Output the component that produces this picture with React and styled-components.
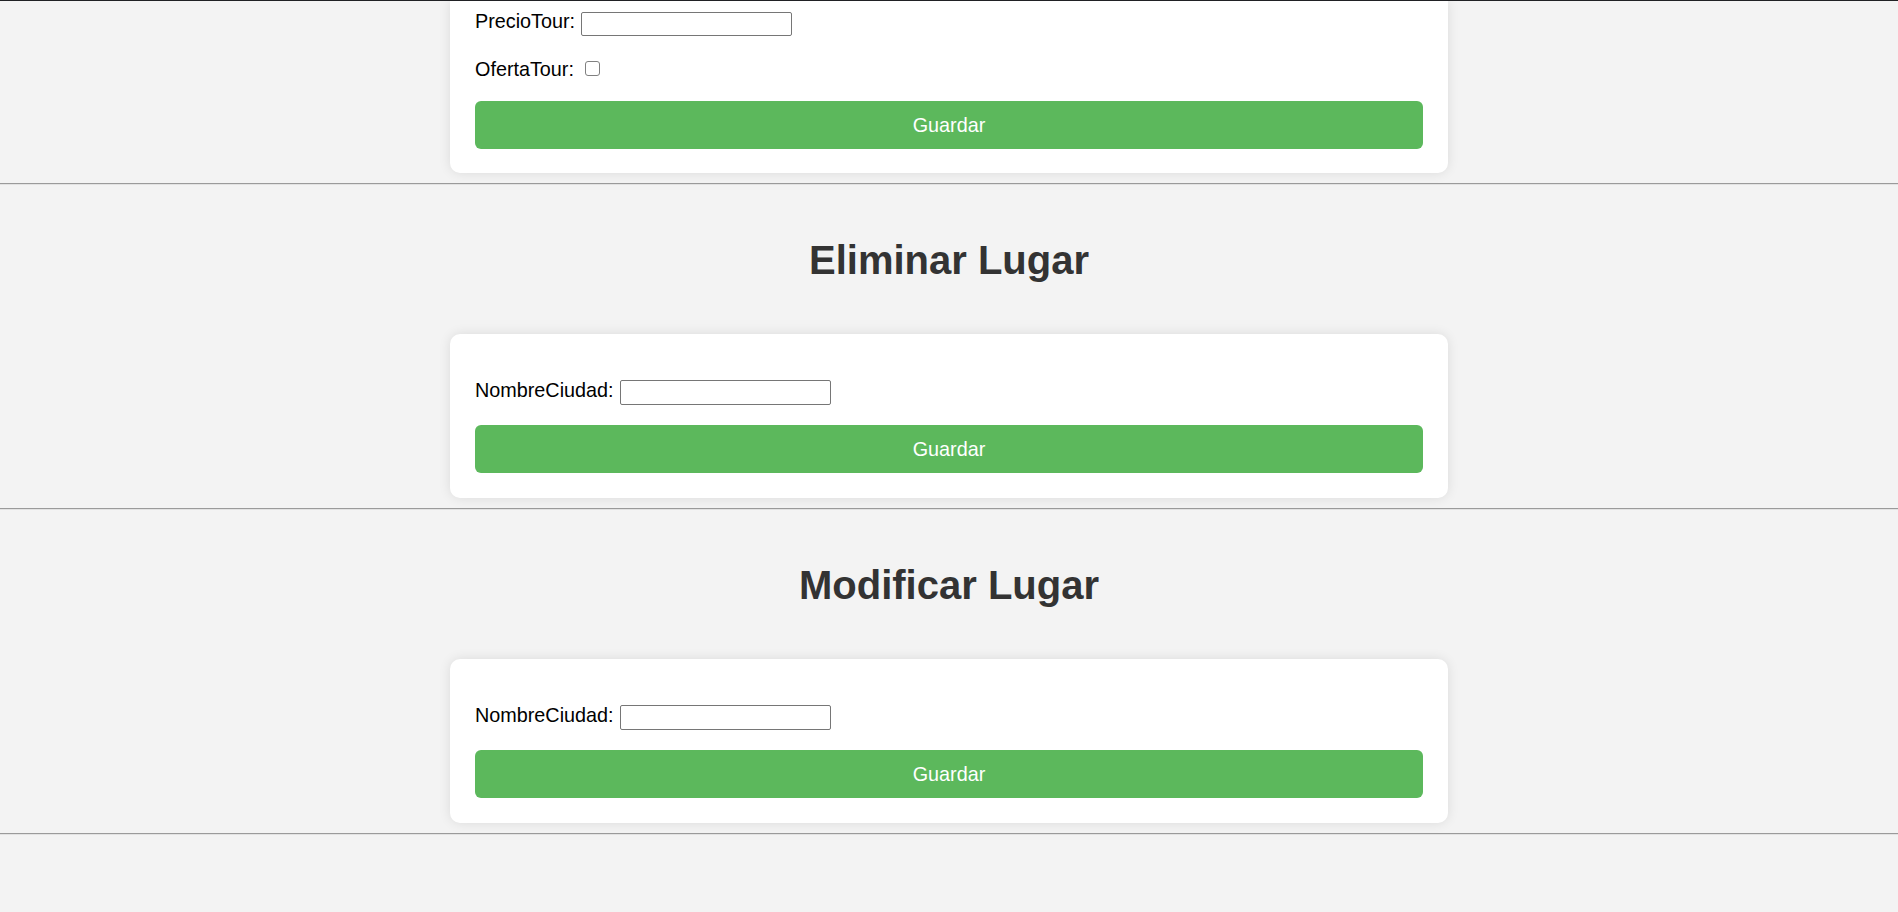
import React from "react";
import styled, { createGlobalStyle } from "styled-components";

const GlobalStyle = createGlobalStyle`
  html, body {
    margin: 0;
    padding: 0;
  }
  body {
    background: #f3f3f3;
    border-top: 1px solid #202124;
    font-family: "Liberation Sans", Arial, sans-serif;
    font-size: 19.8px;
    color: #000;
  }
`;

const Page = styled.div`
  display: flex;
  flex-direction: column;
`;

const Section = styled.section`
  display: flex;
  flex-direction: column;
  align-items: center;
`;

const Title = styled.h1`
  margin: 53px 0 52px;
  font-size: 40px;
  line-height: 44px;
  font-weight: 700;
  color: #333;
  text-align: center;
`;

const Card = styled.form`
  box-sizing: border-box;
  width: 998px;
  background: #fff;
  border-radius: ${(p) => (p.$cut ? "0 0 10px 10px" : "10px")};
  box-shadow: 0 0 12px rgba(0, 0, 0, 0.1);
  padding: ${(p) => (p.$cut ? "10px 25px 24px" : "46px 25px 25px")};
  display: flex;
  flex-direction: column;
  gap: 20px;
`;

const Row = styled.div`
  display: flex;
  align-items: center;
  gap: 6px;
  height: 25px;
`;

const Label = styled.label`
  font-size: 19.8px;
  line-height: 22px;
  color: #000;
  padding-bottom: ${(p) => (p.$raise ? 5 : 0)}px;
`;

const TextInput = styled.input`
  box-sizing: border-box;
  width: 211px;
  height: ${(p) => p.$h || 25}px;
  border: 1px solid #767676;
  border-radius: 2px;
  background: #fff;
  margin: 0;
  padding: 1px 3px;
  font-family: inherit;
  font-size: 16px;
`;

const Check = styled.input`
  appearance: none;
  -webkit-appearance: none;
  box-sizing: border-box;
  width: 15px;
  height: 15px;
  margin: 0 0 0 5px;
  border: 1.5px solid #808080;
  border-radius: 3px;
  background: #fff;
`;

const SaveButton = styled.button`
  width: 100%;
  height: 48px;
  border: none;
  border-radius: 6px;
  background: #5cb85c;
  color: #fff;
  font-family: "Liberation Sans", Arial, sans-serif;
  font-size: 19.8px;
  cursor: pointer;
`;

const Rule = styled.hr`
  width: 100%;
  margin: 10px 0 0;
  border: none;
  border-top: 1px solid #9a9a9a;
  border-bottom: 1px solid #e2e2e2;
  height: 0;
`;

const CitySection = ({ title }) => (
  <Section>
    <Title>{title}</Title>
    <Card onSubmit={(e) => e.preventDefault()}>
      <Row>
        <Label $raise>NombreCiudad:</Label>
        <TextInput type="text" />
      </Row>
      <SaveButton type="submit">Guardar</SaveButton>
    </Card>
    <Rule />
  </Section>
);

export default function App() {
  return (
    <>
      <GlobalStyle />
      <Page>
        <Section>
          <Card $cut onSubmit={(e) => e.preventDefault()}>
            <Row>
              <Label $raise>PrecioTour:</Label>
              <TextInput type="text" $h={24} />
            </Row>
            <Row>
              <Label>OfertaTour:</Label>
              <Check type="checkbox" />
            </Row>
            <SaveButton type="submit">Guardar</SaveButton>
          </Card>
          <Rule />
        </Section>
        <CitySection title="Eliminar Lugar" />
        <CitySection title="Modificar Lugar" />
      </Page>
    </>
  );
}
